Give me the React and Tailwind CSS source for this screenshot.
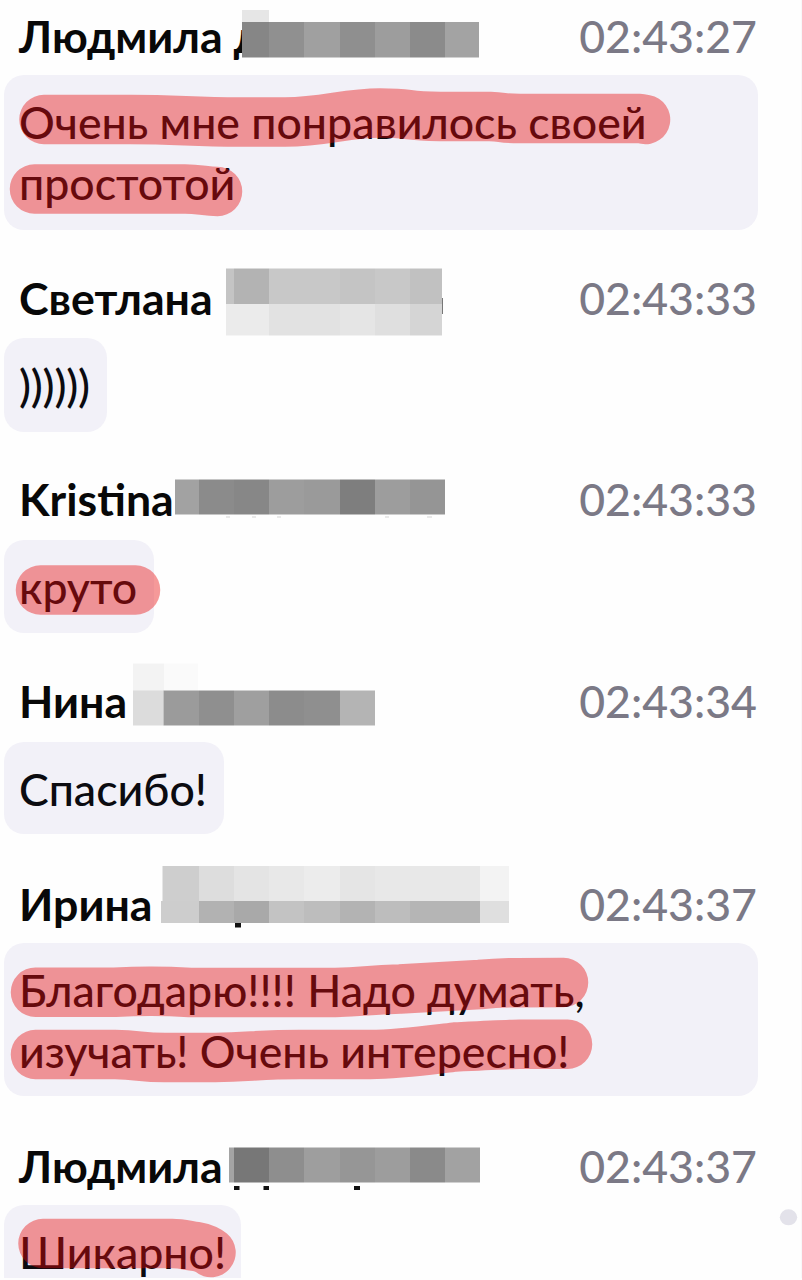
import React from 'react'
import clsx from 'clsx'

const MESSAGES = [
  { name: 'Людмила д', time: '02:43:27', lines: ['Очень мне понравилось своей', 'простотой'], wrap: 'pt-[9px]', gap: 'mt-[12px]', size: 'w-[754px] h-[155px]' },
  { name: 'Светлана', time: '02:43:33', lines: ['))))))'], wrap: 'pt-[41px]', gap: 'mt-[13px]', size: 'w-[103px] h-[94px] tracking-[-0.2px]' },
  { name: 'Kristina', time: '02:43:33', lines: ['круто'], wrap: 'pt-[40px]', gap: 'mt-[14px]', size: 'w-[150px] h-[93px]' },
  { name: 'Нина', time: '02:43:34', lines: ['Спасибо!'], wrap: 'pt-[41px]', gap: 'mt-[14px]', size: 'w-[220px] h-[92px]' },
  { name: 'Ирина', time: '02:43:37', lines: ['Благодарю!!!! Надо думать,', 'изучать! Очень интересно!'], wrap: 'pt-[43px]', gap: 'mt-[12px]', size: 'w-[754px] h-[153px]' },
  { name: 'Людмила', time: '02:43:37', lines: ['Шикарно!'], wrap: 'pt-[43px]', gap: 'mt-[12px]', size: 'w-[237px] h-[93px]' },
]

// rows of hidden surnames: [top, bottom, left edge, then right edge + grey level of each cell]
const MOSAIC = [
  [10, 22, 242, [[269, 230]]],
  [22, 57.5, 242, [[269, 134], [304, 144], [340, 160], [375, 143], [410, 157], [445, 139], [479, 163]]],
  [268.5, 304, 226, [[234, 196], [269, 179], [340, 200], [375, 196], [410, 200], [442, 193]]],
  [304, 335.5, 226, [[269, 235], [340, 226], [375, 229], [410, 223], [442, 213]]],
  [479.5, 514.5, 175, [[199, 162], [234, 139], [269, 135], [304, 157], [340, 154], [375, 126], [410, 157], [445, 149]]],
  [663.5, 691, 133, [[164, 243], [198, 250]]],
  [690.5, 725.5, 133, [[163.5, 220], [199, 155], [234, 143], [269, 159], [304, 140], [340, 143], [375, 180]]],
  [866, 901, 162.5, [[199, 206], [234, 221], [269, 228], [304, 232], [340, 236], [375, 229], [480, 232], [509, 243]]],
  [901, 923, 161, [[199, 205], [234, 178], [269, 169], [304, 195], [340, 189], [375, 179], [410, 189], [480, 181], [509, 223]]],
  [1147.5, 1182.5, 229, [[234, 164], [269, 119], [304, 142], [340, 158], [375, 150], [410, 157], [445, 138], [480, 162]]],
]

const STROKES = [
  'M44 119.5 H130 C180 119.5 190 122 240 122 H285 C325 122 345 113 380 113 C415 113 400 116 440 116.5 H490 C505 117 500 118.5 520 118.5 H640 L645.5 119.5',
  'M34.5 189 H185 C200 189 205 191.5 217.5 191.5',
  'M40.5 590 H135.5',
  'M35.5 992.2 H115 C140 991 165 991 190 992.5 H335 C365 992 365 990 400 989 L480 984.5 C500 982.5 510 982.5 563.5 982.5',
  'M35.5 1054.5 H115 C140 1055 140 1057.5 165 1057.5 H215 C250 1057 260 1054.5 300 1054.5 H370 C400 1054.5 430 1050 455 1047 C485 1045.5 510 1044.2 520 1044.2 H567.5',
  'M43 1243.5 H172 C182 1243.5 188 1245.5 196 1246.5 C204 1248 208 1250 211 1252.5',
]

const SPECKS = [
  [235, 923, 6, 4.5],
  [234, 1186, 5.5, 4],
  [263.5, 1186, 5.5, 4],
  [354, 1186, 6, 4],
]

function Message({ name, time, lines, wrap, gap, size }) {
  return (
    <article className={wrap}>
      <header className="flex justify-between pl-[19px] pr-[44px] text-[44.65px] leading-[54px]">
        <h2 className="whitespace-nowrap font-bold text-[#080808]">{name}</h2>
        <time className="font-medium text-[#7b7986]">{time}</time>
      </header>
      <div className={clsx('ml-1 rounded-[20px] bg-[#f2f1f8] pl-[15px] pt-[17px] text-[44.65px] leading-[61px] font-medium text-[#0b0b10]', gap, size)}>
        {lines.map((line) => (
          <p key={line} className="whitespace-nowrap">{line}</p>
        ))}
      </div>
    </article>
  )
}

function Markup() {
  return (
    <svg className="absolute inset-0 h-[1280px] w-[802px]" viewBox="0 0 802 1280" aria-hidden="true">
      <rect x="242" y="10" width="30" height="54" fill="#fefefe" />
      {MOSAIC.map(([top, bottom, left, cells]) =>
        cells.map(([right, level], i) => {
          const x = i ? cells[i - 1][0] : left
          return <rect key={`${top}-${right}`} x={x} y={top} width={right - x} height={bottom - top} fill={`rgb(${level},${level},${level})`} />
        })
      )}
      {SPECKS.map(([x, y, w, h]) => (
        <rect key={x} x={x} y={y} width={w} height={h} fill="#111" />
      ))}
      <path d="M442.5 298 V314" stroke="#777" strokeWidth="1" />
      <path d="M226 517h4M252 517h4M277 517h4M385 517h4M427 517h5" stroke="#d4d4d4" strokeWidth="1" />
      {STROKES.map((d) => (
        <path key={d} d={d} fill="none" stroke="#e80a0a" strokeOpacity="0.41" strokeWidth="49.5" strokeLinecap="round" strokeLinejoin="round" />
      ))}
      <ellipse cx="788.5" cy="1217.3" rx="8.7" ry="8" fill="#e3e2ea" />
    </svg>
  )
}

export default function App() {
  return (
    <main className="relative h-[1280px] w-[802px] overflow-hidden bg-[#fefefe] font-['Lato','Noto_Sans',sans-serif]">
      <div className="h-[1277.5px] overflow-hidden border-r border-[#f8f8f9]">
        {MESSAGES.map((message) => (
          <Message key={message.name} {...message} />
        ))}
      </div>
      <Markup />
    </main>
  )
}
